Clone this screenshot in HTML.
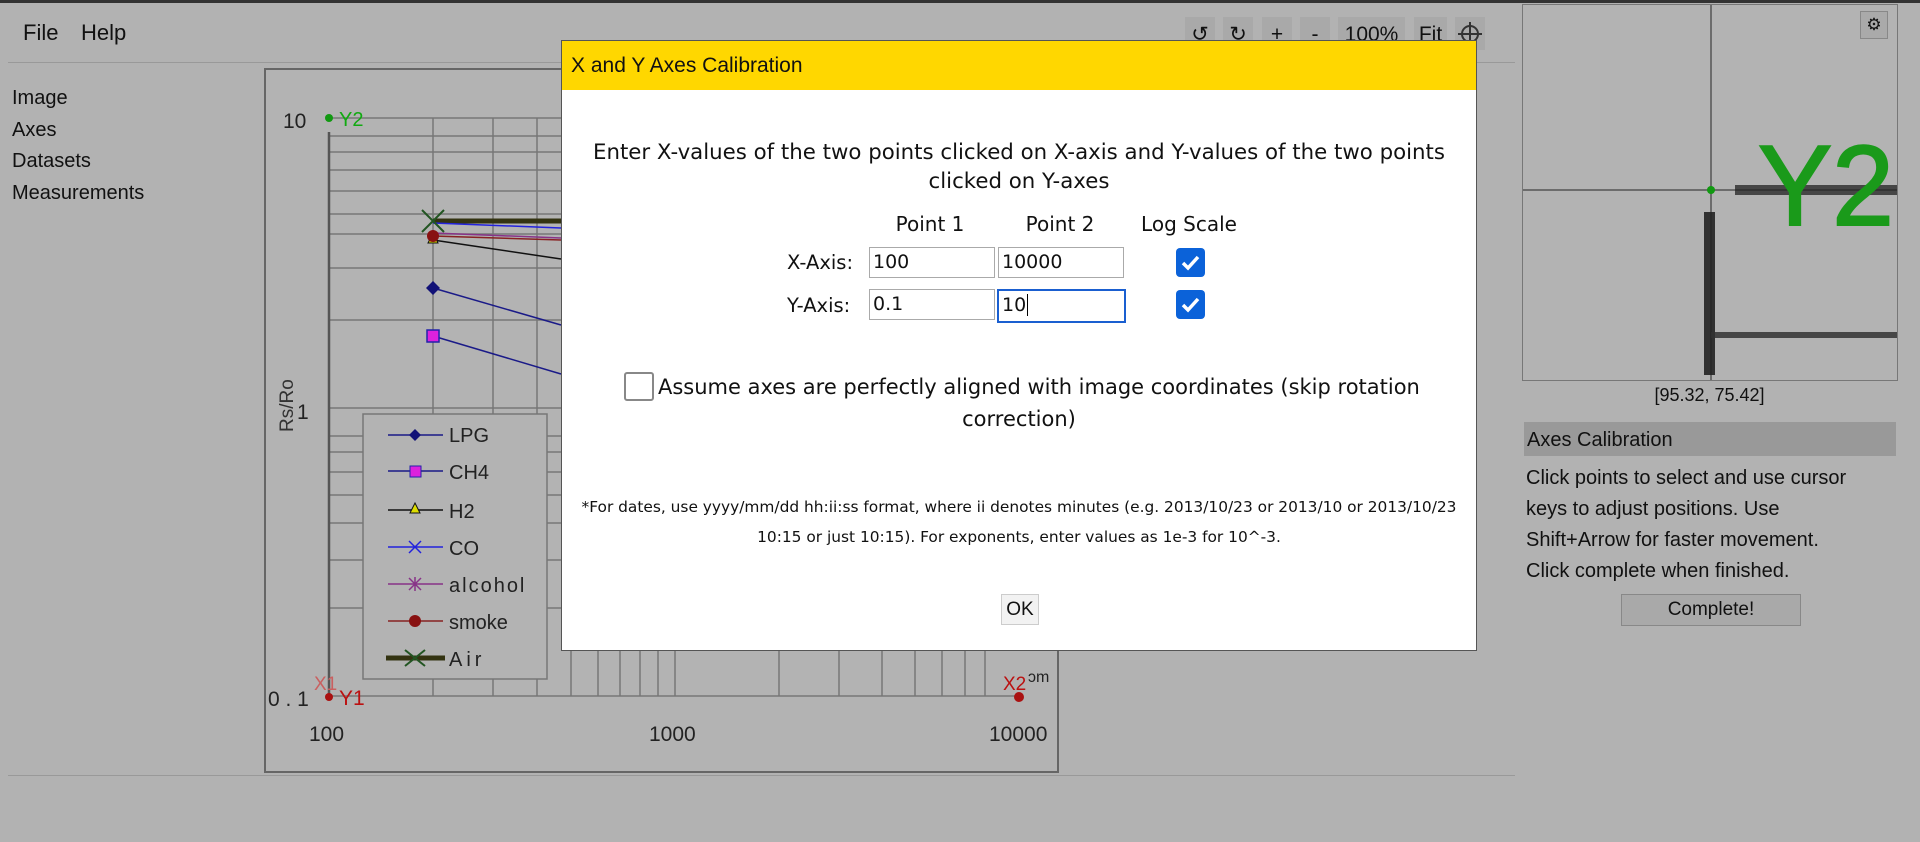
<!DOCTYPE html>
<html><head><meta charset="utf-8"><style>
*{margin:0;padding:0;box-sizing:border-box}
body{width:1920px;height:842px;background:#b2b2b2;font-family:"Liberation Sans",sans-serif;color:#111;position:relative;overflow:hidden}
.a{position:absolute;white-space:nowrap}
.tb{position:absolute;top:17px;height:33px;background:#a9a9a9;font-size:21px;text-align:center;line-height:36px;color:#111}
.modal{position:absolute;left:561px;top:40px;width:916px;height:611px;background:#fff;border:1px solid #555}
.modal .d{font-family:"DejaVu Sans",sans-serif}
.hd{height:49px;background:#ffd700;font-size:21px;line-height:50px;padding-left:9px;color:#111}
.inp{position:absolute;height:31px;border:1px solid #aaa;font-size:20px;line-height:29px;padding-left:3px}
.cb{position:absolute;width:29px;height:29px;background:#0b62d9;border-radius:4px}
</style></head><body>
<div class="a" style="left:0;top:0;width:1920px;height:3px;background:#333"></div>
<div class="a" style="left:23px;top:20px;font-size:22px">File</div>
<div class="a" style="left:81px;top:20px;font-size:22px">Help</div>
<div class="a" style="left:8px;top:62px;width:1507px;height:1px;background:#999"></div>
<div class="a" style="left:8px;top:775px;width:1507px;height:1px;background:#999"></div>
<div class="a" style="left:12px;top:83px;font-size:20px;line-height:31.5px">Image<br>Axes<br>Datasets<br>Measurements</div>

<div class="tb" style="left:1185px;width:30px">↺</div>
<div class="tb" style="left:1223px;width:30px">↻</div>
<div class="tb" style="left:1262px;width:30px">+</div>
<div class="tb" style="left:1300px;width:30px">-</div>
<div class="tb" style="left:1338px;width:67px">100%</div>
<div class="tb" style="left:1414px;width:33px">Fit</div>
<div class="tb" style="left:1455px;width:30px"><svg width="30" height="33" viewBox="0 0 30 33"><circle cx="15" cy="17" r="8" fill="none" stroke="#333" stroke-width="2"/><path d="M15 5V29M3 17H27" stroke="#333" stroke-width="2"/></svg></div>

<svg class="a" style="left:0;top:0" width="1920" height="842">
<rect x="265" y="69" width="793" height="703" fill="#b3b3b3" stroke="#666" stroke-width="2"/>
<g stroke="#777" stroke-width="1.5">
<line x1="329" y1="118" x2="1020" y2="118"/>
<line x1="329" y1="408" x2="1020" y2="408"/>
<line x1="329" y1="696" x2="1020" y2="696"/>
<line x1="329" y1="136" x2="1020" y2="136"/><line x1="329" y1="152" x2="1020" y2="152"/><line x1="329" y1="170" x2="1020" y2="170"/><line x1="329" y1="191" x2="1020" y2="191"/><line x1="329" y1="214" x2="1020" y2="214"/><line x1="329" y1="234" x2="1020" y2="234"/><line x1="329" y1="268" x2="1020" y2="268"/><line x1="329" y1="320" x2="1020" y2="320"/>
<line x1="329" y1="436" x2="1020" y2="436"/><line x1="329" y1="452" x2="1020" y2="452"/><line x1="329" y1="472" x2="1020" y2="472"/><line x1="329" y1="495" x2="1020" y2="495"/><line x1="329" y1="523" x2="1020" y2="523"/><line x1="329" y1="560" x2="1020" y2="560"/><line x1="329" y1="608" x2="1020" y2="608"/>
<line x1="433" y1="118" x2="433" y2="696"/><line x1="493" y1="118" x2="493" y2="696"/><line x1="537" y1="118" x2="537" y2="696"/>
<line x1="571" y1="620" x2="571" y2="696"/><line x1="598" y1="620" x2="598" y2="696"/><line x1="620" y1="620" x2="620" y2="696"/><line x1="640" y1="620" x2="640" y2="696"/><line x1="658" y1="620" x2="658" y2="696"/><line x1="675" y1="620" x2="675" y2="696"/><line x1="779" y1="620" x2="779" y2="696"/><line x1="839" y1="620" x2="839" y2="696"/><line x1="882" y1="620" x2="882" y2="696"/><line x1="915" y1="620" x2="915" y2="696"/><line x1="942" y1="620" x2="942" y2="696"/><line x1="965" y1="620" x2="965" y2="696"/><line x1="985" y1="620" x2="985" y2="696"/>
</g>
<line x1="329" y1="132" x2="329" y2="696" stroke="#555" stroke-width="2.5"/>
<text x="283" y="128" font-size="21" fill="#222" font-family="Liberation Sans">10</text>
<text x="297" y="419" font-size="21" fill="#222" font-family="Liberation Sans">1</text>
<text x="268" y="706" font-size="21" fill="#222" font-family="Liberation Sans">0 . 1</text>
<text x="309" y="741" font-size="21" fill="#222" font-family="Liberation Sans">100</text>
<text x="649" y="741" font-size="21" fill="#222" font-family="Liberation Sans">1000</text>
<text x="989" y="741" font-size="21" fill="#222" font-family="Liberation Sans">10000</text>
<text transform="translate(293,432) rotate(-90)" font-size="19" fill="#333" font-family="Liberation Sans">Rs/Ro</text>
<circle cx="329" cy="118" r="4" fill="#119911"/><text x="339" y="126" font-size="20" fill="#11aa11" font-family="Liberation Sans">Y2</text>
<circle cx="329" cy="697" r="4" fill="#aa1111"/><text x="339" y="705" font-size="21" fill="#bb1111" font-family="Liberation Sans">Y1</text>
<text x="314" y="690" font-size="19" fill="#c96060" font-family="Liberation Sans">X1</text>
<circle cx="1019" cy="697" r="5" fill="#aa1111"/><text x="1003" y="690" font-size="19" fill="#bb1111" font-family="Liberation Sans">X2</text>
<text x="1028" y="682" font-size="16" fill="#222" font-family="Liberation Sans">ɔm</text>
<line x1="433" y1="221" x2="561" y2="221" stroke="#333311" stroke-width="5"/>
<line x1="433" y1="223" x2="561" y2="228" stroke="#2222dd" stroke-width="1.5"/>
<line x1="433" y1="236" x2="561" y2="240" stroke="#882222" stroke-width="1.5"/>
<line x1="433" y1="233" x2="561" y2="238" stroke="#883388" stroke-width="1.5"/>
<line x1="433" y1="240" x2="561" y2="259" stroke="#111" stroke-width="1.5"/>
<line x1="433" y1="288" x2="561" y2="325" stroke="#1a1a88" stroke-width="1.5"/>
<line x1="433" y1="336" x2="561" y2="374" stroke="#1a1a88" stroke-width="1.5"/>
<path d="M422 210L444 232M444 210L422 232" stroke="#225522" stroke-width="2"/>
<path d="M433 233L438 243H428Z" fill="#dddd00" stroke="#111"/>
<circle cx="433" cy="236" r="6" fill="#881111"/>
<path d="M433 281L440 288L433 295L426 288Z" fill="#111177"/>
<rect x="427" y="330" width="12" height="12" fill="#dd22dd" stroke="#2222aa" stroke-width="1.5"/>
<rect x="363" y="414" width="184" height="265" fill="#b3b3b3" stroke="#777" stroke-width="1.5"/>
<g font-family="Liberation Sans" font-size="20" fill="#222">
<line x1="388" y1="435" x2="443" y2="435" stroke="#1a1a88" stroke-width="1.5"/><path d="M415 429L421 435L415 441L409 435Z" fill="#111177"/><text x="449" y="442">LPG</text>
<line x1="388" y1="471" x2="443" y2="471" stroke="#1a1a88" stroke-width="1.5"/><rect x="410" y="466" width="11" height="11" fill="#dd22dd" stroke="#2222aa"/><text x="449" y="479">CH4</text>
<line x1="388" y1="510" x2="443" y2="510" stroke="#111" stroke-width="1.5"/><path d="M415 503L420 513H410Z" fill="#dddd00" stroke="#111"/><text x="449" y="518">H2</text>
<line x1="388" y1="547" x2="443" y2="547" stroke="#2222dd" stroke-width="1.5"/><path d="M409 541L421 553M421 541L409 553" stroke="#2222dd" stroke-width="1.5"/><text x="449" y="555">CO</text>
<line x1="388" y1="584" x2="443" y2="584" stroke="#883388" stroke-width="1.5"/><path d="M409 578L421 590M421 578L409 590M415 577V591" stroke="#883388" stroke-width="1.5"/><text x="449" y="592" letter-spacing="2">alcohol</text>
<line x1="388" y1="621" x2="443" y2="621" stroke="#882222" stroke-width="1.5"/><circle cx="415" cy="621" r="6" fill="#881111"/><text x="449" y="629">smoke</text>
<line x1="386" y1="658" x2="445" y2="658" stroke="#333311" stroke-width="5"/><path d="M405 650L425 666M425 650L405 666" stroke="#225522" stroke-width="2"/><text x="449" y="666" letter-spacing="4">Air</text>
</g>
<!-- magnifier -->
<rect x="1522.5" y="4.5" width="375" height="376" fill="#b3b3b3" stroke="#777"/>
<line x1="1711" y1="5" x2="1711" y2="380" stroke="#555" stroke-width="1.5"/>
<line x1="1523" y1="190" x2="1897" y2="190" stroke="#555" stroke-width="1.5"/>
<rect x="1735" y="185" width="162" height="10" fill="#222" opacity=".75"/>
<text x="1758" y="225" font-size="114" fill="#1a9a1a" stroke="#1a9a1a" stroke-width="2" font-family="Liberation Sans" textLength="136" lengthAdjust="spacingAndGlyphs">Y2</text>
<rect x="1704" y="212" width="11" height="163" fill="#222" opacity=".9"/>
<rect x="1711" y="332" width="186" height="6" fill="#333" opacity=".85"/>
<circle cx="1711" cy="190" r="4" fill="#119911"/>
</svg>

<div class="a" style="left:1860px;top:11px;width:28px;height:28px;border:1px solid #888;background:#aaa;text-align:center;line-height:26px;font-size:17px">⚙</div>
<div class="a" style="left:1522px;top:385px;width:375px;text-align:center;font-size:18px">[95.32, 75.42]</div>
<div class="a" style="left:1524px;top:422px;width:372px;height:34px;background:#999;font-size:20px;line-height:36px;padding-left:3px">Axes Calibration</div>
<div class="a" style="left:1526px;top:463px;font-size:20px;line-height:31px">Click points to select and use cursor<br>keys to adjust positions. Use<br>Shift+Arrow for faster movement.<br>Click complete when finished.</div>
<div class="a" style="left:1621px;top:594px;width:180px;height:32px;border:1px solid #888;background:#a9a9a9;text-align:center;font-size:19px;line-height:30px">Complete!</div>

<div class="modal">
<div class="hd">X and Y Axes Calibration</div>
<div class="a d" style="left:0;top:97px;width:914px;text-align:center;font-size:21.3px;line-height:29px">Enter X-values of the two points clicked on X-axis and Y-values of the two points<br>clicked on Y-axes</div>
<div class="a d" style="left:328px;top:171px;width:80px;text-align:center;font-size:20px">Point 1</div>
<div class="a d" style="left:458px;top:171px;width:80px;text-align:center;font-size:20px">Point 2</div>
<div class="a d" style="left:575px;top:171px;width:104px;text-align:center;font-size:20px">Log Scale</div>
<div class="a d" style="left:225px;top:210px;font-size:19.5px">X-Axis:</div>
<div class="a d" style="left:225px;top:253px;font-size:19.5px">Y-Axis:</div>
<div class="inp d" style="left:307px;top:206px;width:126px;font-size:19px">100</div>
<div class="inp d" style="left:436px;top:206px;width:126px;font-size:19px">10000</div>
<div class="inp d" style="left:307px;top:248px;width:126px;font-size:19px">0.1</div>
<div class="inp d" style="left:435px;top:248px;width:129px;height:34px;border:2px solid #1a5fd0;font-size:19px">10<span style="border-left:1px solid #000;margin-left:1px"></span></div>
<div class="cb" style="left:614px;top:207px"><svg width="29" height="29"><path d="M7 15L12 20L22 9" fill="none" stroke="#fff" stroke-width="3.5"/></svg></div>
<div class="cb" style="left:614px;top:249px"><svg width="29" height="29"><path d="M7 15L12 20L22 9" fill="none" stroke="#fff" stroke-width="3.5"/></svg></div>
<div class="a" style="left:62px;top:331px;width:30px;height:29px;border:2px solid #888;border-radius:3px"></div>
<div class="a d" style="left:96px;top:334px;font-size:21px">Assume axes are perfectly aligned with image coordinates (skip rotation</div>
<div class="a d" style="left:0;top:366px;width:914px;text-align:center;font-size:21px">correction)</div>
<div class="a d" style="left:0;top:451px;width:914px;text-align:center;font-size:15.4px;line-height:30px">*For dates, use yyyy/mm/dd hh:ii:ss format, where ii denotes minutes (e.g. 2013/10/23 or 2013/10 or 2013/10/23<br>10:15 or just 10:15). For exponents, enter values as 1e-3 for 10^-3.</div>
<div class="a" style="left:439px;top:553px;width:38px;height:31px;border:1px solid #ccc;background:#f2f2f2;text-align:center;font-size:19px;line-height:29px">OK</div>
</div>
</body></html>
